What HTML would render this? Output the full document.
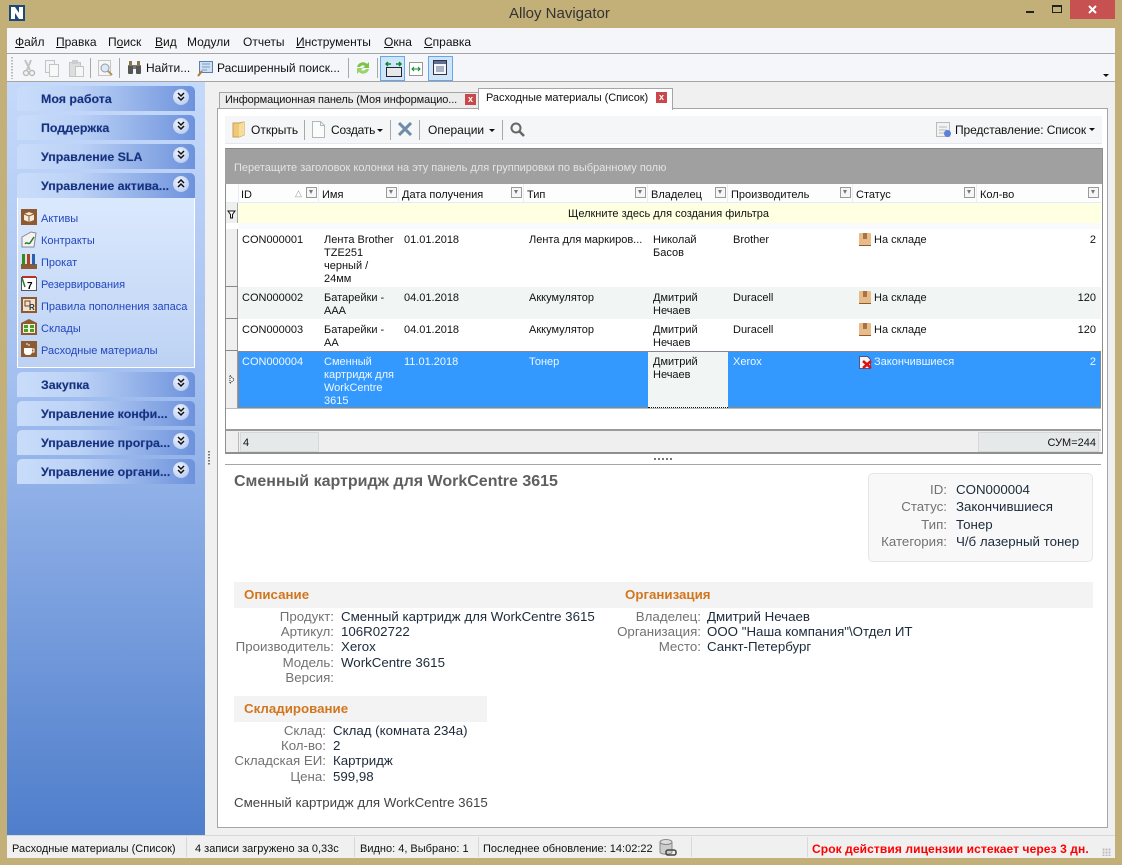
<!DOCTYPE html>
<html><head><meta charset="utf-8"><title>Alloy Navigator</title>
<style>
html,body{margin:0;padding:0}
body{width:1122px;height:865px;position:relative;overflow:hidden;background:#c2b078;font-family:"Liberation Sans",sans-serif;font-size:11px;color:#111}
div,span.t,svg{position:absolute}
.t{position:absolute;white-space:nowrap;line-height:13px;padding-top:1px}
.r{text-align:right}
.m{font-size:12px;top:35px}
.h{left:17px;width:178px;height:25px;border-radius:5px 5px 0 0;background:linear-gradient(90deg,#c9ddfa,#bcd2f6 35%,#6d92dc)}
.h b{position:absolute;left:24px;top:6px;font-size:12.4px;line-height:14px;color:#14307f;white-space:nowrap;text-shadow:0 0 1px rgba(20,48,127,.35)}
.c{position:absolute;right:6px;top:3px;width:16px;height:16px;border-radius:8px;background:radial-gradient(circle at 40% 35%,#f2f6fe,#a9c0ec)}
.c svg{left:4px;top:3px}
.l{left:41px;color:#2347bd;font-size:11px;padding-top:2px}
.f{width:9px;height:9px;border:1px solid #9a9a9a;background:#f6f6f6;top:187px}
.f:after{content:"";position:absolute;left:2px;top:2px;border-left:2.5px solid transparent;border-right:2.5px solid transparent;border-top:4px solid #777}
.k{color:#727272;font-size:13.3px;text-align:right;line-height:15px;padding-top:0}
.v{color:#1c2a3a;font-size:13.3px;line-height:15px;padding-top:0}
.o{color:#d2761e;font-weight:bold;font-size:13.3px;line-height:15px}
.sep{width:1px;background:#a8a8a8}
.ss{top:837px;width:1px;height:20px;background:#d8d8d8}
</style></head><body>

<!-- title bar -->
<svg style="left:9px;top:5px" width="17" height="17"><rect width="16" height="16" fill="#1f4a78"/><path d="M2 14V2h4l4 6V2h4v12h-4L6 8v6z" fill="#fff"/></svg>
<span class="t" style="left:509px;top:5px;font-size:15px;line-height:16px;color:#333">Alloy Navigator</span>
<div style="left:1026px;top:11px;width:8px;height:2px;background:#222"></div>
<div style="left:1052px;top:5px;width:8px;height:5px;border:1px solid #222;border-top-width:2px"></div>
<div style="left:1070px;top:0;width:45px;height:19px;background:#c75050"></div>
<svg style="left:1087px;top:5px" width="12" height="10"><path d="M2 1l7 7M9 1L2 8" stroke="#fff" stroke-width="2"/></svg>

<!-- client -->
<div style="left:7px;top:28px;width:1108px;height:830px;background:#f0f0f0"></div>
<div style="left:7px;top:28px;width:1108px;height:25px;background:#f5f6f9"></div>
<div style="left:7px;top:53px;width:1108px;height:1px;background:#a5a5a5"></div>
<div style="left:7px;top:54px;width:1108px;height:27px;background:#f5f6f9"></div>
<div style="left:7px;top:81px;width:1108px;height:1px;background:#a5a5a5"></div>

<span class="t m" style="left:15px"><u>Ф</u>айл</span>
<span class="t m" style="left:56px"><u>П</u>равка</span>
<span class="t m" style="left:108px">П<u>о</u>иск</span>
<span class="t m" style="left:155px"><u>В</u>ид</span>
<span class="t m" style="left:187px">Модули</span>
<span class="t m" style="left:243px">Отчеты</span>
<span class="t m" style="left:296px"><u>И</u>нструменты</span>
<span class="t m" style="left:384px"><u>О</u>кна</span>
<span class="t m" style="left:424px"><u>С</u>правка</span>

<!-- toolbar -->
<div style="left:11px;top:57px;width:2px;height:22px;background-image:linear-gradient(#bbb 50%,transparent 50%);background-size:2px 3px"></div>
<svg style="left:22px;top:59px" width="14" height="18"><path d="M3 1l5 10M9 1L5 11" stroke="#c4c4c4" stroke-width="2" fill="none"/><circle cx="4" cy="14" r="2.500" fill="none" stroke="#bbb" stroke-width="1.500"/><circle cx="10" cy="14" r="2.500" fill="none" stroke="#bbb" stroke-width="1.500"/></svg>
<svg style="left:45px;top:60px" width="15" height="17"><rect x=".5" y=".5" width="9" height="12" fill="#f4f4f4" stroke="#c4c4c4"/><rect x="4.500" y="4.500" width="9" height="12" fill="#f8f8f8" stroke="#c4c4c4"/></svg>
<svg style="left:69px;top:60px" width="16" height="17"><rect x=".5" y="2.500" width="11" height="14" fill="#ddd" stroke="#c4c4c4"/><rect x="3" y="0" width="6" height="4" fill="#ccc"/><rect x="6.500" y="6.500" width="8" height="10" fill="#f6f6f6" stroke="#c4c4c4"/></svg>
<div class="sep" style="left:90px;top:58px;height:20px"></div>
<svg style="left:98px;top:60px" width="16" height="17"><rect x=".5" y=".5" width="12" height="15" fill="#f6f6f6" stroke="#c4c4c4"/><circle cx="7" cy="8" r="4" fill="#dbe9f7" stroke="#99a"/><path d="M10 11l4 4" stroke="#b9935a" stroke-width="2"/></svg>
<div class="sep" style="left:119px;top:58px;height:20px"></div>
<svg style="left:127px;top:60px" width="16" height="15"><rect x="1" y="5" width="5" height="9" rx="1" fill="#555"/><rect x="9" y="5" width="5" height="9" rx="1" fill="#555"/><rect x="2" y="1" width="3" height="5" fill="#8a7350"/><rect x="10" y="1" width="3" height="5" fill="#8a7350"/><rect x="6" y="5" width="3" height="4" fill="#777"/></svg>
<span class="t" style="left:146px;top:61px;font-size:12px">Найти...</span>
<svg style="left:197px;top:60px" width="17" height="17"><rect x="2.500" y="1.500" width="13" height="11" fill="#cfe0f3" stroke="#5a7fb0"/><path d="M5 4h8M5 7h8M5 10h5" stroke="#7a9cc8"/><path d="M1 16l4-5" stroke="#b07a30" stroke-width="2"/></svg>
<span class="t" style="left:217px;top:61px;font-size:12px">Расширенный поиск...</span>
<div class="sep" style="left:348px;top:58px;height:20px"></div>
<svg style="left:355px;top:59px" width="16" height="18"><path d="M2 8a6 6 0 0 1 10-3l2-2v6H8l2-2a3.500 3.500 0 0 0-5 1z" fill="#7fc24a"/><path d="M14 10a6 6 0 0 1-10 3l-2 2V9h6l-2 2a3.500 3.500 0 0 0 5-1z" fill="#9ad36a"/></svg>
<div class="sep" style="left:377px;top:58px;height:20px"></div>
<div style="left:380px;top:56px;width:23px;height:23px;background:#cfe5fb;border:1px solid #66a7e8"></div>
<svg style="left:385px;top:61px" width="18" height="17"><path d="M1 3h5M3 1L1 3l2 2M11 3h5M14 1l2 2-2 2" stroke="#0a8a2a" stroke-width="1.500" fill="none"/><rect x="1.500" y="6.500" width="15" height="9" fill="#e8e8e8" stroke="#223"/></svg>
<svg style="left:409px;top:62px" width="15" height="15"><rect x=".5" y=".5" width="13" height="13" fill="#fff" stroke="#999"/><path d="M3 7h8M5 5L3 7l2 2M9 5l2 2-2 2" stroke="#0a8a2a" fill="none"/></svg>
<div style="left:428px;top:56px;width:23px;height:23px;background:#cfe5fb;border:1px solid #66a7e8"></div>
<svg style="left:433px;top:60px" width="15" height="16"><rect x=".5" y=".5" width="13" height="14" fill="#f4f6fa" stroke="#334"/><rect x="1" y="1" width="12" height="3" fill="#5d6f95"/><path d="M3 7h8M3 9h8M3 11h8" stroke="#5d6f95"/></svg>
<div style="left:1103px;top:74px;border-left:3px solid transparent;border-right:3px solid transparent;border-top:3px solid #111"></div>

<!-- sidebar -->
<div style="left:7px;top:82px;width:198px;height:753px;background:linear-gradient(#c5d9fa,#a3bff0 40%,#4f7ecb)"></div>
<div class="h" style="top:86px"><b>Моя работа</b><span class="c"><svg width="8" height="10"><path d="M1 1l3 3 3-3M1 5l3 3 3-3" stroke="#111" stroke-width="1.500" fill="none"/></svg></span></div>
<div class="h" style="top:115px"><b>Поддержка</b><span class="c"><svg width="8" height="10"><path d="M1 1l3 3 3-3M1 5l3 3 3-3" stroke="#111" stroke-width="1.500" fill="none"/></svg></span></div>
<div class="h" style="top:144px"><b>Управление SLA</b><span class="c"><svg width="8" height="10"><path d="M1 1l3 3 3-3M1 5l3 3 3-3" stroke="#111" stroke-width="1.500" fill="none"/></svg></span></div>
<div class="h" style="top:173px"><b>Управление актива...</b><span class="c"><svg width="8" height="10"><path d="M1 4l3-3 3 3M1 8l3-3 3 3" stroke="#111" stroke-width="1.500" fill="none"/></svg></span></div>
<div style="left:17px;top:198px;width:176px;height:169px;border:1px solid #fff;border-top:0;background:linear-gradient(#dbe9fe,#bdd2f3)"></div>
<div class="h" style="top:372px"><b>Закупка</b><span class="c"><svg width="8" height="10"><path d="M1 1l3 3 3-3M1 5l3 3 3-3" stroke="#111" stroke-width="1.500" fill="none"/></svg></span></div>
<div class="h" style="top:401px"><b>Управление конфи...</b><span class="c"><svg width="8" height="10"><path d="M1 1l3 3 3-3M1 5l3 3 3-3" stroke="#111" stroke-width="1.500" fill="none"/></svg></span></div>
<div class="h" style="top:430px"><b>Управление програ...</b><span class="c"><svg width="8" height="10"><path d="M1 1l3 3 3-3M1 5l3 3 3-3" stroke="#111" stroke-width="1.500" fill="none"/></svg></span></div>
<div class="h" style="top:459px"><b>Управление органи...</b><span class="c"><svg width="8" height="10"><path d="M1 1l3 3 3-3M1 5l3 3 3-3" stroke="#111" stroke-width="1.500" fill="none"/></svg></span></div>

<svg style="left:21px;top:209px" width="16" height="16"><rect width="16" height="16" fill="#8d5a32"/><path d="M3 5l5-2 5 2v6l-5 2-5-2z" fill="#f6ead8"/><path d="M3 5l5 2 5-2M8 7v6" stroke="#8d5a32" fill="none"/></svg>
<span class="t l" style="top:211px">Активы</span>
<svg style="left:21px;top:231px" width="16" height="17"><path d="M1 6l9-5 5 1-2 14H1z" fill="#f3f3f3" stroke="#888"/><path d="M4 13c2-3 3 1 5-1l4-6" stroke="#2a7a2a" stroke-width="1.500" fill="none"/></svg>
<span class="t l" style="top:233px">Контракты</span>
<svg style="left:21px;top:253px" width="16" height="16"><rect y="11" width="16" height="5" fill="#8d5a32"/><rect x="1" y="1" width="3" height="11" fill="#3a8a1a"/><rect x="6" y="1" width="3" height="11" fill="#b04020"/><rect x="11" y="1" width="3" height="11" fill="#2a60b0"/></svg>
<span class="t l" style="top:255px">Прокат</span>
<svg style="left:21px;top:275px" width="16" height="16"><rect x=".5" y="2.500" width="15" height="13" fill="#fff" stroke="#555"/><rect x="1" y="1" width="14" height="2" fill="#c03020"/><text x="6" y="14" font-size="10" font-weight="bold" font-family="Liberation Sans">7</text><path d="M1 3l3 9" stroke="#2a7a2a" stroke-width="1.500"/></svg>
<span class="t l" style="top:277px">Резервирования</span>
<svg style="left:21px;top:297px" width="16" height="16"><rect width="16" height="16" fill="#8d5a32"/><rect x="2" y="2" width="12" height="12" fill="#f1e3cf"/><rect x="4" y="4" width="5" height="5" fill="none" stroke="#6b4426"/><text x="8" y="13" font-size="8" font-weight="bold" fill="#333" font-family="Liberation Sans">R</text></svg>
<span class="t l" style="top:299px">Правила пополнения запаса</span>
<svg style="left:21px;top:319px" width="16" height="16"><path d="M0 4l8-4 8 4v12H0z" fill="#8d5a32"/><rect x="2" y="5" width="12" height="9" fill="#f3efe0"/><rect x="3" y="6" width="4" height="3" fill="#4aa020"/><rect x="9" y="6" width="4" height="3" fill="#4aa020"/><rect x="3" y="10" width="4" height="3" fill="#4aa020"/><rect x="9" y="10" width="4" height="3" fill="#4aa020"/></svg>
<span class="t l" style="top:321px">Склады</span>
<svg style="left:21px;top:341px" width="16" height="16"><rect width="16" height="16" fill="#8d5a32"/><path d="M3 7h8v4a3 3 0 0 1-3 3H6a3 3 0 0 1-3-3z" fill="#fff"/><path d="M11 8h2v3h-2" fill="none" stroke="#fff"/><path d="M6 2v2M8 3v2" stroke="#fff"/></svg>
<span class="t l" style="top:343px">Расходные материалы</span>

<!-- splitter dots -->
<div style="left:208px;top:451px;width:2px;height:14px;background-image:linear-gradient(#777 50%,transparent 50%);background-size:2px 3px"></div>

<!-- tabs -->
<div style="left:219px;top:92px;width:259px;height:16px;background:#ececec;border:1px solid #a5a5a5;border-bottom:0"></div>
<span class="t" style="left:225px;top:93px;font-size:11px;letter-spacing:-.12px">Информационная панель (Моя информацио...</span>
<div style="left:465px;top:94px;width:11px;height:11px;background:#c8484c;color:#fff;font:bold 9px/10px 'Liberation Sans';text-align:center">x</div>
<div style="left:217px;top:108px;width:889px;height:718px;background:#fff;border:1px solid #a5a5a5"></div>
<div style="left:478px;top:88px;width:193px;height:21px;background:#fff;border:1px solid #a5a5a5;border-bottom:0"></div>
<span class="t" style="left:486px;top:91px;font-size:11px;letter-spacing:-.05px">Расходные материалы (Список)</span>
<div style="left:656px;top:92px;width:11px;height:11px;background:#c8484c;color:#fff;font:bold 9px/10px 'Liberation Sans';text-align:center">x</div>

<!-- grid toolbar -->
<div style="left:225px;top:116px;width:877px;height:27px;background:#f5f6f8;border-bottom:1px solid #e4e8ee"></div>
<svg style="left:232px;top:121px" width="14" height="17"><path d="M1 2h6l5-1v13l-5 2H1z" fill="#f0c878" stroke="#c8a050"/><path d="M7 3l5-2v13l-5 2z" fill="#f7dd9c"/></svg>
<span class="t" style="left:251px;top:123px;font-size:12px">Открыть</span>
<div class="sep" style="left:304px;top:120px;height:20px"></div>
<svg style="left:312px;top:121px" width="13" height="17"><path d="M.5.5h8l4 4v12H.5z" fill="#fafcfc" stroke="#b0b8b8"/><path d="M8.500.5v4h4" fill="none" stroke="#b0b8b8"/></svg>
<span class="t" style="left:331px;top:123px;font-size:12px;letter-spacing:-.2px">Создать</span>
<div style="left:377px;top:129px;border-left:3px solid transparent;border-right:3px solid transparent;border-top:3px solid #111"></div>
<div class="sep" style="left:390px;top:120px;height:20px"></div>
<svg style="left:398px;top:122px" width="15" height="14"><path d="M1 1l12 12M13 1L1 13" stroke="#6f8ba8" stroke-width="3"/></svg>
<div class="sep" style="left:419px;top:120px;height:20px"></div>
<span class="t" style="left:428px;top:123px;font-size:12px">Операции</span>
<div style="left:489px;top:129px;border-left:3px solid transparent;border-right:3px solid transparent;border-top:3px solid #111"></div>
<div class="sep" style="left:502px;top:120px;height:20px"></div>
<svg style="left:510px;top:122px" width="15" height="15"><circle cx="6" cy="6" r="4.500" fill="none" stroke="#666" stroke-width="2"/><path d="M9 9l5 5" stroke="#666" stroke-width="2.500"/></svg>
<svg style="left:936px;top:122px" width="16" height="16"><rect x=".5" y=".5" width="13" height="14" fill="#f2f2f2" stroke="#bbb"/><path d="M3 5h8M3 8h8M3 11h6" stroke="#bbb"/><circle cx="11.500" cy="11.500" r="3.500" fill="#5b80dc"/></svg>
<span class="t" style="left:955px;top:123px;font-size:12px;letter-spacing:-.1px">Представление: Список</span>
<div style="left:1089px;top:128px;border-left:3px solid transparent;border-right:3px solid transparent;border-top:3px solid #111"></div>

<!-- grid -->
<div style="left:225px;top:148px;width:876px;height:304px;background:#fff;border:1px solid #8f8f8f;border-top:0;border-bottom:2px solid #8f8f8f"></div>
<div style="left:225px;top:148px;width:877px;height:36px;background:#a0a0a0;border-top:1px solid #888;box-sizing:border-box"></div>
<span class="t" style="left:234px;top:161px;font-size:11px;color:#e4e4e4">Перетащите заголовок колонки на эту панель для группировки по выбранному полю</span>

<div style="left:226px;top:184px;width:875px;height:19px;background:#fdfdfe;border-bottom:1px solid #e2ecf8;box-sizing:border-box"></div>
<div style="left:238px;top:184px;width:1px;height:19px;background:#e6eefa"></div>
<div style="left:318px;top:184px;width:1px;height:19px;background:#e6eefa"></div>
<div style="left:398px;top:184px;width:1px;height:19px;background:#e6eefa"></div>
<div style="left:523px;top:184px;width:1px;height:19px;background:#e6eefa"></div>
<div style="left:647px;top:184px;width:1px;height:19px;background:#e6eefa"></div>
<div style="left:727px;top:184px;width:1px;height:19px;background:#e6eefa"></div>
<div style="left:852px;top:184px;width:1px;height:19px;background:#e6eefa"></div>
<div style="left:976px;top:184px;width:1px;height:19px;background:#e6eefa"></div>

<span class="t" style="left:241px;top:188px">ID</span>
<span class="t" style="left:295px;top:186px;font-size:9px;color:#999">△</span>
<div class="f" style="left:306px"></div>
<span class="t" style="left:322px;top:188px">Имя</span>
<div class="f" style="left:386px"></div>
<span class="t" style="left:402px;top:188px">Дата получения</span>
<div class="f" style="left:511px"></div>
<span class="t" style="left:527px;top:188px">Тип</span>
<div class="f" style="left:635px"></div>
<span class="t" style="left:651px;top:188px">Владелец</span>
<div class="f" style="left:715px"></div>
<span class="t" style="left:731px;top:188px">Производитель</span>
<div class="f" style="left:840px"></div>
<span class="t" style="left:856px;top:188px">Статус</span>
<div class="f" style="left:964px"></div>
<span class="t" style="left:980px;top:188px">Кол-во</span>
<div class="f" style="left:1088px"></div>

<div style="left:226px;top:203px;width:12px;height:20px;background:#efefef;border-right:1px solid #aaa;box-sizing:border-box"></div>
<svg style="left:227px;top:210px" width="10" height="10"><path d="M1 1h7L5.500 4.500V8h-2V4.500z" fill="#fff" stroke="#111"/></svg>
<div style="left:238px;top:203px;width:863px;height:20px;background:#ffffe1"></div>
<span class="t" style="left:568px;top:207px">Щелкните здесь для создания фильтра</span>
<div style="left:238px;top:223px;width:863px;height:6px;background:#f9fafc"></div>

<!-- row indicators -->
<div style="left:226px;top:229px;width:12px;height:179px;background:#efefef;border-right:1px solid #999;box-sizing:border-box"></div>
<div style="left:226px;top:286px;width:12px;height:1px;background:#888"></div>
<div style="left:226px;top:318px;width:12px;height:1px;background:#888"></div>
<div style="left:226px;top:350px;width:12px;height:1px;background:#888"></div>
<div style="left:226px;top:408px;width:875px;height:1px;background:#bbb"></div>
<svg style="left:229px;top:375px" width="7" height="9"><path d="M1 .5l4 4-4 4z" fill="#fff" stroke="#111" stroke-dasharray="1 1"/></svg>

<!-- rows -->
<div style="left:238px;top:287px;width:863px;height:32px;background:#f1f6f4"></div>
<div style="left:238px;top:351px;width:863px;height:57px;background:#3399ff;border:1px dotted #d07a2a;box-sizing:border-box"></div>
<div style="left:648px;top:352px;width:80px;height:56px;background:#f1f6f4;border-bottom:1px dotted #111;box-sizing:border-box"></div>

<span class="t" style="left:242px;top:233px">CON000001</span>
<span class="t" style="left:324px;top:233px">Лента Brother<br>TZE251<br>черный /<br>24мм</span>
<span class="t" style="left:404px;top:233px">01.01.2018</span>
<span class="t" style="left:529px;top:233px">Лента для маркиров...</span>
<span class="t" style="left:653px;top:233px">Николай<br>Басов</span>
<span class="t" style="left:733px;top:233px">Brother</span>
<span class="t" style="left:874px;top:233px">На складе</span>
<span class="t r" style="right:26px;top:233px">2</span>

<span class="t" style="left:242px;top:291px">CON000002</span>
<span class="t" style="left:324px;top:291px">Батарейки -<br>AAA</span>
<span class="t" style="left:404px;top:291px">04.01.2018</span>
<span class="t" style="left:529px;top:291px">Аккумулятор</span>
<span class="t" style="left:653px;top:291px">Дмитрий<br>Нечаев</span>
<span class="t" style="left:733px;top:291px">Duracell</span>
<span class="t" style="left:874px;top:291px">На складе</span>
<span class="t r" style="right:26px;top:291px">120</span>

<span class="t" style="left:242px;top:323px">CON000003</span>
<span class="t" style="left:324px;top:323px">Батарейки -<br>AA</span>
<span class="t" style="left:404px;top:323px">04.01.2018</span>
<span class="t" style="left:529px;top:323px">Аккумулятор</span>
<span class="t" style="left:653px;top:323px">Дмитрий<br>Нечаев</span>
<span class="t" style="left:733px;top:323px">Duracell</span>
<span class="t" style="left:874px;top:323px">На складе</span>
<span class="t r" style="right:26px;top:323px">120</span>

<svg style="left:859px;top:233px" width="12" height="13"><rect width="12" height="13" rx="1" fill="#e8bb8a"/><rect x="4" width="4" height="6" fill="#a87446"/><rect y="12" width="12" height="1" fill="#8d5a32"/></svg>
<svg style="left:859px;top:291px" width="12" height="13"><rect width="12" height="13" rx="1" fill="#e8bb8a"/><rect x="4" width="4" height="6" fill="#a87446"/><rect y="12" width="12" height="1" fill="#8d5a32"/></svg>
<svg style="left:859px;top:323px" width="12" height="13"><rect width="12" height="13" rx="1" fill="#e8bb8a"/><rect x="4" width="4" height="6" fill="#a87446"/><rect y="12" width="12" height="1" fill="#8d5a32"/></svg>

<span class="t" style="left:242px;top:355px;color:#f0f7ff">CON000004</span>
<span class="t" style="left:324px;top:355px;color:#f0f7ff">Сменный<br>картридж для<br>WorkCentre<br>3615</span>
<span class="t" style="left:404px;top:355px;color:#f0f7ff">11.01.2018</span>
<span class="t" style="left:529px;top:355px;color:#f0f7ff">Тонер</span>
<span class="t" style="left:653px;top:355px">Дмитрий<br>Нечаев</span>
<span class="t" style="left:733px;top:355px;color:#f0f7ff">Xerox</span>
<svg style="left:859px;top:356px" width="13" height="13"><path d="M.5.5h8l3 3v9H.5z" fill="#f6f6f6" stroke="#557"/><path d="M4 5l8 7M12 5l-8 7" stroke="#e01010" stroke-width="2.500"/></svg>
<span class="t" style="left:874px;top:355px;color:#f0f7ff">Закончившиеся</span>
<span class="t r" style="right:26px;top:355px;color:#f0f7ff">2</span>

<!-- grid footer -->
<div style="left:226px;top:429px;width:875px;height:2px;background:#9a9a9a"></div>
<div style="left:226px;top:431px;width:875px;height:21px;background:#efefef"></div>
<div style="left:238px;top:432px;width:1px;height:20px;background:#bbb"></div>
<div style="left:240px;top:432px;width:77px;height:18px;background:#e6e9ea;border:1px solid #d8d8d8"></div>
<span class="t" style="left:243px;top:436px">4</span>
<div style="left:978px;top:432px;width:119px;height:18px;background:#e6e9ea;border:1px solid #d8d8d8"></div>
<span class="t r" style="right:26px;top:436px">СУМ=244</span>

<!-- splitter -->
<div style="left:654px;top:458px;width:18px;height:2px;background-image:linear-gradient(90deg,#777 50%,transparent 50%);background-size:4px 2px"></div>
<div style="left:225px;top:464px;width:876px;height:1px;background:#a5a5a5"></div>

<!-- details -->
<span class="t" style="left:234px;top:472px;font-size:16px;line-height:18px;font-weight:bold;color:#5f5f5f">Сменный картридж для WorkCentre 3615</span>

<div style="left:868px;top:473px;width:223px;height:87px;background:#f8f8f8;border:1px solid #e6e6e6;border-radius:5px"></div>
<span class="t k" style="right:175px;top:482px">ID:</span><span class="t v" style="left:956px;top:482px">CON000004</span>
<span class="t k" style="right:175px;top:499px">Статус:</span><span class="t v" style="left:956px;top:499px">Закончившиеся</span>
<span class="t k" style="right:175px;top:517px">Тип:</span><span class="t v" style="left:956px;top:517px">Тонер</span>
<span class="t k" style="right:175px;top:534px">Категория:</span><span class="t v" style="left:956px;top:534px">Ч/б лазерный тонер</span>

<div style="left:234px;top:582px;width:859px;height:26px;background:#f3f3f3"></div>
<span class="t o" style="left:244px;top:586px">Описание</span>
<span class="t o" style="left:625px;top:586px">Организация</span>

<span class="t k" style="right:788px;top:609px">Продукт:</span><span class="t v" style="left:341px;top:609px">Сменный картридж для WorkCentre 3615</span>
<span class="t k" style="right:788px;top:624px">Артикул:</span><span class="t v" style="left:341px;top:624px">106R02722</span>
<span class="t k" style="right:788px;top:639px">Производитель:</span><span class="t v" style="left:341px;top:639px">Xerox</span>
<span class="t k" style="right:788px;top:655px">Модель:</span><span class="t v" style="left:341px;top:655px">WorkCentre 3615</span>
<span class="t k" style="right:788px;top:670px">Версия:</span>

<span class="t k" style="right:421px;top:609px">Владелец:</span><span class="t v" style="left:707px;top:609px">Дмитрий Нечаев</span>
<span class="t k" style="right:421px;top:624px">Организация:</span><span class="t v" style="left:707px;top:624px">ООО "Наша компания"\Отдел ИТ</span>
<span class="t k" style="right:421px;top:639px">Место:</span><span class="t v" style="left:707px;top:639px">Санкт-Петербург</span>

<div style="left:234px;top:696px;width:253px;height:26px;background:#f3f3f3"></div>
<span class="t o" style="left:244px;top:700px">Складирование</span>

<span class="t k" style="right:796px;top:723px">Склад:</span><span class="t v" style="left:333px;top:723px">Склад (комната 234а)</span>
<span class="t k" style="right:796px;top:738px">Кол-во:</span><span class="t v" style="left:333px;top:738px">2</span>
<span class="t k" style="right:796px;top:753px">Складская ЕИ:</span><span class="t v" style="left:333px;top:753px">Картридж</span>
<span class="t k" style="right:796px;top:769px">Цена:</span><span class="t v" style="left:333px;top:769px">599,98</span>

<span class="t" style="left:234px;top:795px;font-size:13.3px;line-height:15px;color:#444;padding-top:0">Сменный картридж для WorkCentre 3615</span>

<!-- status bar -->
<div style="left:7px;top:835px;width:1108px;height:1px;background:#d8d8d8"></div>
<span class="t" style="left:12px;top:842px">Расходные материалы (Список)</span>
<div class="ss" style="left:186px"></div>
<span class="t" style="left:195px;top:842px">4 записи загружено за 0,33с</span>
<div class="ss" style="left:354px"></div>
<span class="t" style="left:360px;top:842px">Видно: 4, Выбрано: 1</span>
<div class="ss" style="left:478px"></div>
<span class="t" style="left:483px;top:842px">Последнее обновление: 14:02:22</span>
<svg style="left:659px;top:839px" width="18" height="18"><path d="M1 3v10c0 3 12 3 12 0V3" fill="#ccc" stroke="#888"/><ellipse cx="7" cy="3" rx="6" ry="2.500" fill="#ddd" stroke="#888"/><rect x="7" y="11" width="10" height="5" rx="2" fill="none" stroke="#444" stroke-width="1.500"/></svg>
<div class="ss" style="left:691px"></div>
<div class="ss" style="left:807px"></div>
<span class="t" style="left:812px;top:842px;font-weight:bold;color:#f00;font-size:12px;letter-spacing:.1px">Срок действия лицензии истекает через 3 дн.</span>
<div style="left:1102px;top:848px;width:9px;height:8px;background-image:radial-gradient(#bbb 1px,transparent 1.200px);background-size:3px 3px"></div>
</body></html>
